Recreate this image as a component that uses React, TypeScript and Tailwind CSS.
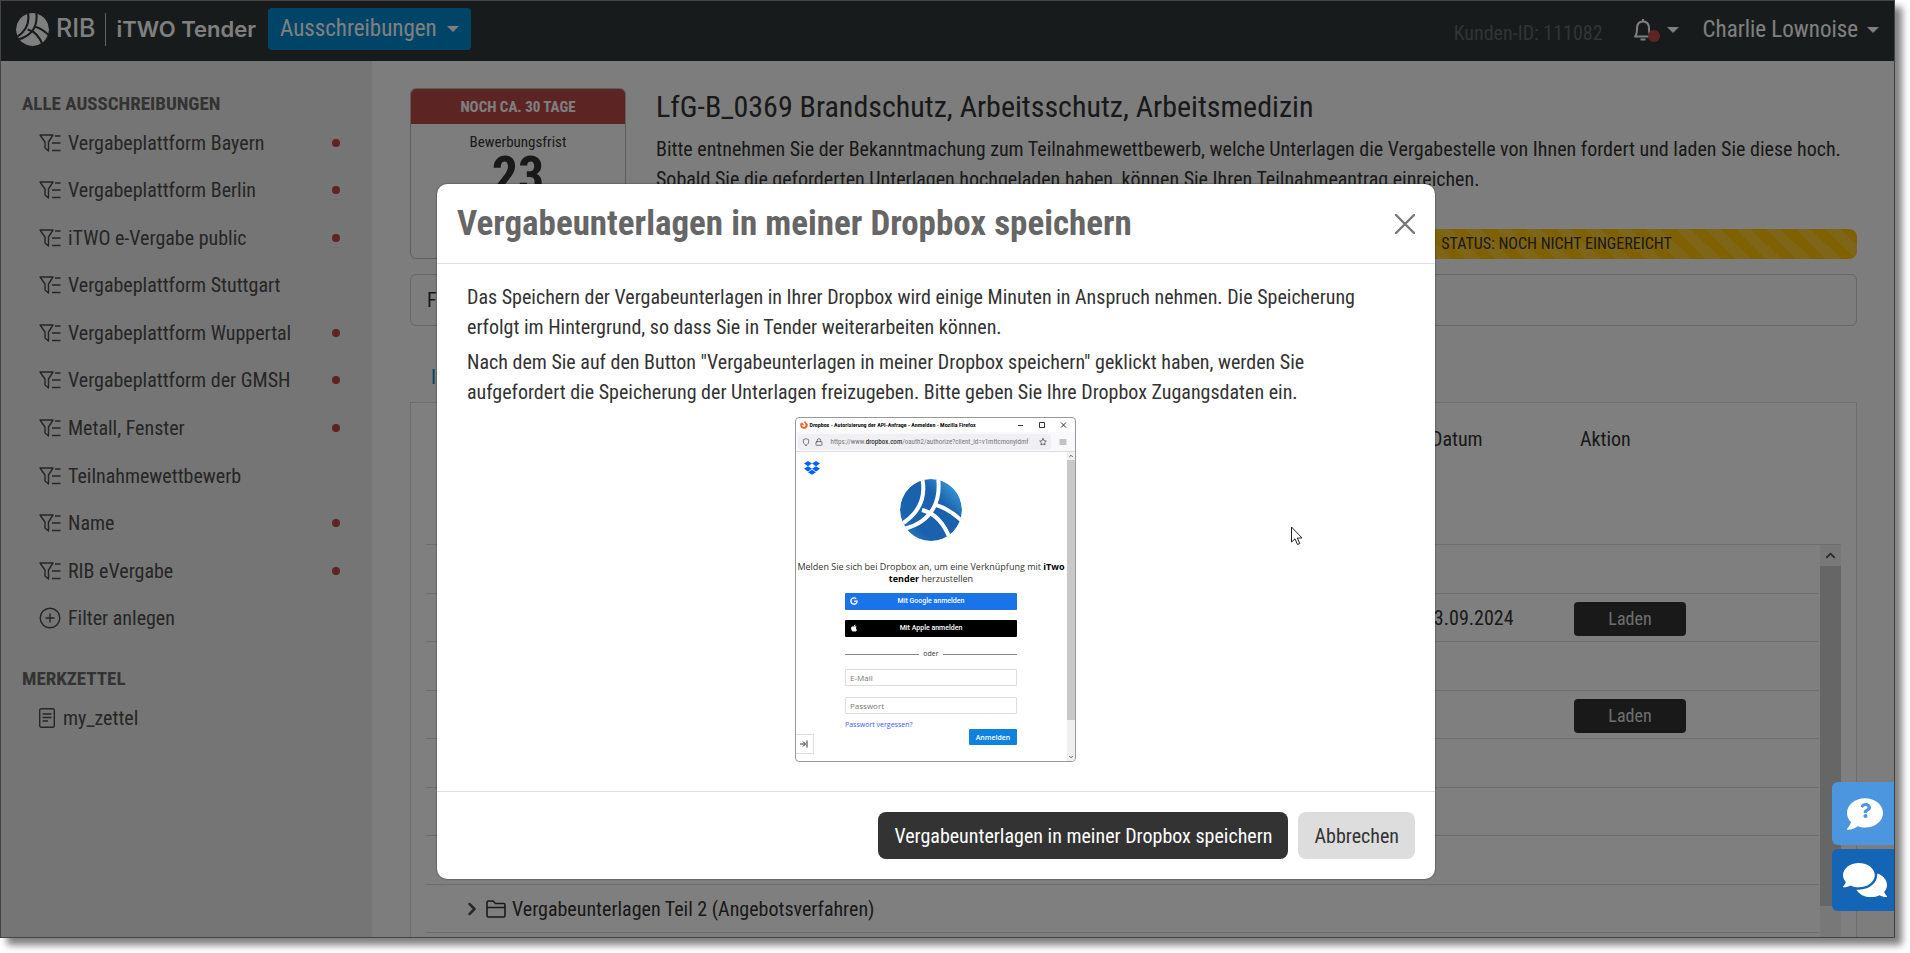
import React from 'react';
import { FaApple, FaComment, FaComments, FaFirefoxBrowser, FaQuestion } from 'react-icons/fa';
import { FaGoogle } from 'react-icons/fa6';
import { FiChevronRight, FiChevronUp, FiLock, FiMenu, FiShield, FiStar } from 'react-icons/fi';

const filters = [
    { name: 'Vergabeplattform Bayern', unread: true },
    { name: 'Vergabeplattform Berlin', unread: true },
    { name: 'iTWO e-Vergabe public', unread: true },
    { name: 'Vergabeplattform Stuttgart', unread: false },
    { name: 'Vergabeplattform Wuppertal', unread: true },
    { name: 'Vergabeplattform der GMSH', unread: true },
    { name: 'Metall, Fenster', unread: true },
    { name: 'Teilnahmewettbewerb', unread: false },
    { name: 'Name', unread: true },
    { name: 'RIB eVergabe', unread: true },
];

const rows = [
    { name: '', date: '', load: false },
    { name: '', date: '13.09.2024', load: true },
    { name: '', date: '', load: false },
    { name: '', date: '', load: true },
    { name: '', date: '', load: false },
    { name: '', date: '', load: false },
    { name: '', date: '', load: false },
    { name: 'Vergabeunterlagen Teil 2 (Angebotsverfahren)', date: '', load: false },
    { name: '', date: '', load: false },
];

const RibLogo: React.FC<{ className: string; fill: string; line: string }> = ({ className, fill, line }) => (
    <svg viewBox="0 0 62 62" className={className} aria-hidden="true">
        <defs>
            <linearGradient id="rib-blue" x1="0" y1="1" x2="1" y2="0">
                <stop offset="0" stopColor="#2a8fd6" />
                <stop offset="0.25" stopColor="#1b62ae" />
                <stop offset="0.65" stopColor="#1a62ad" />
                <stop offset="1" stopColor="#45b0ea" />
            </linearGradient>
            <clipPath id="rib-clip">
                <circle cx="31" cy="31" r="31" />
            </clipPath>
        </defs>
        <g clipPath="url(#rib-clip)">
            <circle cx="31" cy="31" r="31" fill={fill} />
            <g fill="none" stroke={line} strokeWidth="4">
                <path d="M22 -2C26 16 22 33 0 46" />
                <path d="M38 -2C41 20 34 42 4 50" />
                <path d="M22 31C34 34 44 44 50 60" />
                <path d="M36 26C46 29 54 34 64 44" />
            </g>
        </g>
    </svg>
);

const Caret: React.FC = () => (
    <span className="inline-block border-x-6 border-t-6 border-x-transparent border-t-current" />
);

const FilterIcon: React.FC = () => (
    <svg viewBox="0 0 22 18" className="h-[18px] w-[22px]" fill="none" stroke="currentColor" strokeWidth="1.4">
        <path d="M1 1H14L9.5 8V17L6 14V8Z" strokeLinejoin="round" />
        <path d="M16 2H21.5M13 9H21.5M13 16.500H21.500" />
    </svg>
);

const PlusIcon: React.FC = () => (
    <svg viewBox="0 0 22 22" className="size-[22px]" fill="none" stroke="currentColor" strokeWidth="1.4">
        <circle cx="11" cy="11" r="9.800" />
        <path d="M11 6.500V15.500M6.500 11H15.500" />
    </svg>
);

const NoteIcon: React.FC = () => (
    <svg viewBox="0 0 16 20" className="h-5 w-4" fill="none" stroke="currentColor" strokeWidth="1.4">
        <rect x="0.700" y="0.700" width="14.600" height="18.600" rx="1.500" />
        <path d="M3.500 6H12.500M3.500 9.500H12.500M3.500 13H9" />
    </svg>
);

const FolderIcon: React.FC = () => (
    <svg viewBox="0 0 20 18" className="h-[18px] w-5" fill="none" stroke="currentColor" strokeWidth="1.600">
        <path d="M1 15.500V2.500Q1 1 2.500 1H7L9.500 3.500H17.500Q19 3.500 19 5V15.500Q19 17 17.500 17H2.500Q1 17 1 15.500ZM1 7.500H19" />
    </svg>
);

const BellIcon: React.FC = () => (
    <svg viewBox="0 0 20 24" className="h-6 w-5" fill="none" stroke="currentColor" strokeWidth="2">
        <path d="M2 18.500C4 16.500 4 14.500 4 10.500C4 6 6.500 3.500 10 3.500S16 6 16 10.500C16 14.500 16 16.500 18 18.500Z" strokeLinejoin="round" />
        <path d="M10 1V3.500M7.500 21.500H12.500" />
    </svg>
);

const Header: React.FC = () => (
    <header className="flex h-[60px] shrink-0 items-start justify-between bg-[#2f3739] text-white">
        <div className="flex items-center pt-[7px] pl-[15px]">
            <RibLogo className="size-[33px]" fill="#fff" line="#2f3739" />
            <span className="ml-[7px] font-[Inter,sans-serif] text-[25px] font-medium">RIB</span>
            <span className="mx-[10px] h-[33px] w-px bg-white/70" />
            <span className="font-[Inter,sans-serif] text-[22px] font-semibold">iTWO Tender</span>
            <button className="ml-3 flex h-[42px] items-center gap-[10px] rounded bg-[#008bd0] px-3 text-[23px]">
                Ausschreibungen
                <Caret />
            </button>
        </div>
        <div className="flex h-[58px] items-center pr-[15px]">
            <span className="pt-[6px] text-[20px] text-[#656869]">Kunden-ID: 111082</span>
            <button className="relative ml-[30px] flex items-center gap-[14px]" aria-label="Benachrichtigungen">
                <BellIcon />
                <span className="absolute top-3 left-[15px] size-3 rounded-full bg-[#b94a48]" />
                <Caret />
            </button>
            <button className="ml-6 flex items-center gap-[9px] text-[23px]">
                Charlie Lownoise
                <Caret />
            </button>
        </div>
    </header>
);

const Sidebar: React.FC = () => (
    <aside className="w-[371px] shrink-0 bg-[#eaeaea] pt-7 text-[20px] text-[#4c4c4c]">
        <h2 className="pl-[21px] text-[19px] leading-[30px] font-bold text-[#666]">ALLE AUSSCHREIBUNGEN</h2>
        <ul className="grid h-[523px] auto-rows-fr pr-8 pl-[38px]">
            {filters.map((f) => (
                <li key={f.name} className="flex items-center justify-between">
                    <a href="#" className="flex items-center gap-[7px]">
                        <FilterIcon />
                        {f.name}
                    </a>
                    {f.unread && <span className="size-2 rounded-full bg-[#c04444]" />}
                </li>
            ))}
            <li className="flex items-center">
                <a href="#" className="flex items-center gap-[7px]">
                    <PlusIcon />
                    Filter anlegen
                </a>
            </li>
        </ul>
        <h2 className="mt-[22px] pl-[21px] text-[19px] leading-[30px] font-bold text-[#666]">MERKZETTEL</h2>
        <a href="#" className="mt-[9px] flex items-center gap-2 pl-[38px] leading-[30px]">
            <NoteIcon />
            my_zettel
        </a>
    </aside>
);

const Content: React.FC = () => (
    <main className="flex min-w-0 flex-1 flex-col bg-[#fafafa] pt-[27px] pr-[37px] pl-[38px] text-[20px] text-[#333]">
        <div className="flex gap-[30px]">
            <div className="h-[171px] w-[216px] shrink-0 overflow-hidden rounded-md border border-[#bbb] text-center">
                <div className="h-[35px] bg-[#b94a48] text-[15px] leading-9 font-bold text-white">
                    NOCH CA. 30 TAGE
                </div>
                <div className="pt-[7px] text-[15px] leading-[22px]">Bewerbungsfrist</div>
                <div className="text-[52px] leading-[46px] font-bold">23</div>
            </div>
            <div className="min-w-0 flex-1">
                <h1 className="text-[30px] leading-[38px]">LfG-B_0369 Brandschutz, Arbeitsschutz, Arbeitsmedizin</h1>
                <p className="mt-2 leading-[30px]">
                    Bitte entnehmen Sie der Bekanntmachung zum Teilnahmewettbewerb, welche Unterlagen die Vergabestelle
                    von Ihnen fordert und laden Sie diese hoch. Sobald Sie die geforderten Unterlagen hochgeladen haben,
                    können Sie Ihren Teilnahmeantrag einreichen.
                </p>
                <div className="mt-[35px] h-[30px] rounded-lg bg-[#ffc107] bg-[linear-gradient(45deg,rgba(255,255,255,0.15)_25%,transparent_25%,transparent_50%,rgba(255,255,255,0.15)_50%,rgba(255,255,255,0.15)_75%,transparent_75%)] bg-size-[30px_30px] text-center text-[16px] leading-[30px]">
                    <span className="ml-[600px]">STATUS: NOCH NICHT EINGEREICHT</span>
                </div>
            </div>
        </div>
        <div className="mt-[15px] h-[52px] shrink-0 rounded-md border border-[#ccc] px-4 leading-[50px]">Frist</div>
        <div className="mt-[36px] px-[21px] leading-[30px] text-[#0a8ac8]">Info</div>
        <div className="mt-[10px] min-h-0 flex-1 overflow-hidden border border-b-0 border-[#ddd] bg-white px-[15px]">
            <div className="flex h-[142px] border-b border-[#ddd] pt-[21px] leading-[30px]">
                <span className="flex-1" />
                <span className="w-[149px]">Datum</span>
                <span className="w-[261px]">Aktion</span>
            </div>
            <div className="flex">
                <table className="mr-px flex-1 table-fixed border-separate border-spacing-0">
                    <tbody>
                        {rows.map((r, i) => (
                            <tr key={i} className="odd:h-[49px] even:h-[48px]">
                                <td className="border-b border-[#ddd] p-0 pl-9">
                                    {r.name && (
                                        <span className="flex items-center gap-[6px]">
                                            <FiChevronRight className="-mr-[2px] size-5 stroke-3 text-[#555]" />
                                            <FolderIcon />
                                            {r.name}
                                        </span>
                                    )}
                                </td>
                                <td className="w-[150px] border-b border-[#ddd] p-0">{r.date}</td>
                                <td className="w-[245px] border-b border-[#ddd] p-0">
                                    {r.load && (
                                        <button className="mt-[2px] block h-[34px] w-[112px] rounded bg-[#333] text-[18px] text-[#ddd]">
                                            Laden
                                        </button>
                                    )}
                                </td>
                            </tr>
                        ))}
                    </tbody>
                </table>
                <div className="w-[21px] bg-[#f0f0f0]">
                    <FiChevronUp className="h-[21px] w-[21px] stroke-3 p-[3px] text-[#555]" />
                    <div className="h-[340px] bg-[#cdcdcd]" />
                </div>
            </div>
        </div>
    </main>
);

/* small preview of the Dropbox login window */
const DropboxPreview: React.FC = () => (
    <div className="mx-auto flex h-[345px] w-[281px] flex-col overflow-hidden rounded-sm border border-[#999] bg-white font-['Open_Sans',sans-serif] text-[9px] text-[#333]">
        <div className="flex h-[14px] shrink-0 items-center pr-2 pl-1">
            <FaFirefoxBrowser className="mr-[2px] size-2 shrink-0 text-[#f0602a]" />
            <span className="flex-1 font-['Roboto_Condensed',sans-serif] text-[6px] leading-none font-semibold whitespace-nowrap text-black">
                Dropbox - Autorisierung der API-Anfrage - Anmelden - Mozilla Firefox
            </span>
            <svg viewBox="0 0 50 8" className="h-2 w-[50px] shrink-0" fill="none" stroke="#333">
                <path d="M1 4.500H6M22.500 1.500H27.500V6.500H22.500ZM44 1.500L49 6.500M49 1.500L44 6.500" />
            </svg>
        </div>
        <div className="flex h-[20px] shrink-0 items-center border-b border-[#ddd] bg-[#f9f9fb] pr-2 pl-[2px]">
            <div className="flex h-4 min-w-0 flex-1 items-center rounded bg-[#f0f0f4] px-1 text-[#777]">
                <FiShield className="size-2 shrink-0 text-[#444]" />
                <FiLock className="mx-[5px] size-2 shrink-0 text-[#444]" />
                <span className="mx-[3px] flex-1 font-['Roboto_Condensed',sans-serif] text-[7px] whitespace-nowrap">
                    https://www.<span className="text-black">dropbox.com</span>/oauth2/authorize?client_id=v1mttcmonyidmf
                </span>
                <FiStar className="size-2 shrink-0 text-[#333]" />
            </div>
            <FiMenu className="ml-2 size-2 text-[#555]" />
        </div>
        <div className="flex min-h-0 flex-1">
            <div className="relative flex flex-1 flex-col items-center">
                <svg viewBox="0 0 16 14" className="mt-[9px] ml-2 h-[14px] w-4 self-start" fill="#0061ff">
                    <path d="M4 0L8 2.600L4 5.200L0 2.600ZM12 0L16 2.600L12 5.200L8 2.600ZM4 5.200L8 7.800L4 10.400L0 7.800ZM12 5.200L16 7.800L12 10.400L8 7.800ZM4 11.200L8 8.700L12 11.200L8 13.800Z" />
                </svg>
                <RibLogo className="mt-1 size-[62px]" fill="url(#rib-blue)" line="#fff" />
                <p className="mt-5 text-center leading-3 whitespace-nowrap">
                    Melden Sie sich bei Dropbox an, um eine Verknüpfung mit <b className="text-black">iTwo</b>
                    <br />
                    <b className="text-black">tender</b> herzustellen
                </p>
                <div className="flex w-[172px] flex-col pt-2">
                    <button className="relative h-[17px] rounded-[1px] bg-[#1a73e8] font-[Roboto,sans-serif] text-[7px] leading-none font-medium text-white">
                        <FaGoogle className="absolute top-1 left-[5px] size-2" />
                        Mit Google anmelden
                    </button>
                    <button className="relative mt-[10px] h-[17px] rounded-[1px] bg-black font-[Roboto,sans-serif] text-[7px] leading-none font-medium text-white">
                        <FaApple className="absolute top-1 left-[5px] size-2" />
                        Mit Apple anmelden
                    </button>
                    <div className="mt-[11px] flex h-3 items-center gap-1 text-[7px] leading-3">
                        <span className="h-px flex-1 bg-[#888]" />
                        oder
                        <span className="h-px flex-1 bg-[#888]" />
                    </div>
                    <input
                        type="email"
                        aria-label="E-Mail"
                        placeholder="E-Mail"
                        className="mt-[9px] h-[17px] rounded-[1px] border border-[#ddd] px-1 text-[8px] placeholder:text-[#777]"
                    />
                    <input
                        type="password"
                        aria-label="Passwort"
                        placeholder="Passwort"
                        className="mt-[11px] h-[17px] rounded-[1px] border border-[#ddd] px-1 text-[8px] placeholder:text-[#777]"
                    />
                    <a href="#" className="mt-[7px] text-[7px] leading-[8px] text-[#3d5afe]">
                        Passwort vergessen?
                    </a>
                    <button className="h-4 w-12 self-end rounded-[1px] bg-[#0f82e0] text-[7px] leading-none font-semibold text-white">
                        Anmelden
                    </button>
                </div>
                <div className="absolute bottom-[7px] left-0 flex h-5 w-[18px] items-center justify-center border border-l-0 border-[#ddd]">
                    <svg viewBox="0 0 8 8" className="size-2" fill="none" stroke="#333">
                        <path d="M0 4H5M3 1.500L5.500 4L3 6.500M7 0.500V7.500" />
                    </svg>
                </div>
            </div>
            <div className="flex w-2 flex-col bg-[#f0f0f0]">
                <FiChevronUp className="size-2 stroke-3 p-px" />
                <div className="h-[260px] bg-[#c8c8c8]" />
                <FiChevronUp className="mt-auto size-2 rotate-180 stroke-3 p-px" />
            </div>
        </div>
    </div>
);

const SaveDialog: React.FC = () => (
    <div
        role="dialog"
        aria-labelledby="dialog-title"
        className="absolute top-[183px] left-[436px] w-[998px] rounded-[10px] bg-white text-[20px] text-[#333] shadow-[0_0_2px_rgba(0,0,0,0.6)]"
    >
        <div className="flex h-[80px] items-center justify-between border-b border-[#dee2e6] px-5">
            <h2 id="dialog-title" className="text-[35px] leading-[48px] font-bold text-[#666]">
                Vergabeunterlagen in meiner Dropbox speichern
            </h2>
            <button aria-label="Schließen">
                <svg viewBox="0 0 20 20" className="size-5" fill="none" stroke="#777" strokeWidth="2.400">
                    <path d="M1 1L19 19M19 1L1 19" strokeLinecap="round" />
                </svg>
            </button>
        </div>
        <div className="space-y-[5px] pt-[18px] pr-8 pb-[29px] pl-[30px] leading-[30px]">
            <p>
                Das Speichern der Vergabeunterlagen in Ihrer Dropbox wird einige Minuten in Anspruch nehmen. Die
                Speicherung erfolgt im Hintergrund, so dass Sie in Tender weiterarbeiten können.
            </p>
            <p className="pb-[5px]">
                Nach dem Sie auf den Button "Vergabeunterlagen in meiner Dropbox speichern" geklickt haben, werden Sie
                aufgefordert die Speicherung der Unterlagen freizugeben. Bitte geben Sie Ihre Dropbox Zugangsdaten ein.
            </p>
            <DropboxPreview />
        </div>
        <div className="flex justify-end gap-[10px] border-t border-[#dee2e6] px-5 py-5">
            <button className="h-[47px] rounded-lg bg-[#333] px-4 text-white">
                Vergabeunterlagen in meiner Dropbox speichern
            </button>
            <button className="h-[47px] rounded-lg bg-[#ddd] px-4">Abbrechen</button>
        </div>
    </div>
);

const SupportButtons: React.FC = () => (
    <div className="absolute right-0 bottom-[26px] flex w-[62px] flex-col gap-1 text-white">
        <button
            aria-label="Hilfe"
            className="relative flex h-[63px] items-center justify-center rounded-l-md bg-[#4b96de] pl-1"
        >
            <FaComment className="size-9" />
            <FaQuestion className="absolute top-[21px] size-[15px] text-[#4b96de]" />
        </button>
        <button aria-label="Chat" className="flex h-[62px] items-center justify-center rounded-l-md bg-[#1465b5] pl-1">
            <FaComments className="size-11" />
        </button>
    </div>
);

const App: React.FC = () => {
    return (
        <div className="h-screen overflow-hidden bg-white pr-[15px] pb-[15px] font-['Roboto_Condensed','Liberation_Sans_Narrow',sans-serif]">
            <div className="relative flex h-full flex-col border border-[#444] shadow-[7px_7px_7px_rgba(0,0,0,0.5)]">
                <Header />
                <div className="flex min-h-0 flex-1">
                    <Sidebar />
                    <Content />
                </div>
                <div className="absolute inset-0 bg-black/50" />
                <SaveDialog />
                <SupportButtons />
                {/* mouse pointer */}
                <svg viewBox="0 0 12 20" className="absolute top-[525px] left-[1290px] h-5 w-3" fill="#fff" stroke="#222">
                    <path d="M0.500 1V16L4 12.800L6.500 18.500L8.800 17.500L6.300 12H11Z" />
                </svg>
            </div>
        </div>
    );
};

export default App;
